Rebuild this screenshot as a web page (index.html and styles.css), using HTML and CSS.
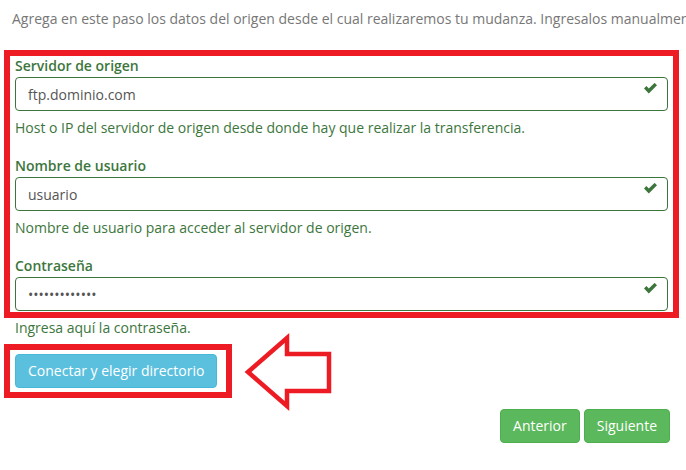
FILE: index.html
```html
<!DOCTYPE html>
<html lang="es">
<head>
  <meta charset="UTF-8">
  <meta name="viewport" content="width=device-width, initial-scale=1.0">
  <title>Mudanza - Datos del origen</title>
  <link rel="stylesheet" href="styles.css">
</head>
<body>

  <div class="page">
    <p class="intro">Agrega en este paso los datos del origen desde el cual realizaremos tu mudanza. Ingresalos manualmente o selecciona uno de tus servicios.</p>

    <div class="highlight highlight-form">
      <div class="form-group">
        <label for="host">Servidor de origen</label>
        <div class="input-wrap">
          <input id="host" type="text" value="ftp.dominio.com" readonly>
          <svg class="check" viewBox="0 0 13 11"><polygon points="0,5.4 2.4,3.1 4.8,5.6 10.6,-0.1 13,2.3 4.8,10.6"/></svg>
        </div>
        <p class="help">Host o IP del servidor de origen desde donde hay que realizar la transferencia.</p>
      </div>

      <div class="form-group">
        <label for="user">Nombre de usuario</label>
        <div class="input-wrap">
          <input id="user" type="text" value="usuario" readonly>
          <svg class="check" viewBox="0 0 13 11"><polygon points="0,5.4 2.4,3.1 4.8,5.6 10.6,-0.1 13,2.3 4.8,10.6"/></svg>
        </div>
        <p class="help">Nombre de usuario para acceder al servidor de origen.</p>
      </div>

      <div class="form-group last">
        <label for="pass">Contraseña</label>
        <div class="input-wrap">
          <input id="pass" type="password" value="1234567890123" readonly>
          <svg class="check" viewBox="0 0 13 11"><polygon points="0,5.4 2.4,3.1 4.8,5.6 10.6,-0.1 13,2.3 4.8,10.6"/></svg>
        </div>
      </div>
    </div>
    <p class="help help-outside">Ingresa aquí la contraseña.</p>

    <div class="connect-row">
      <div class="highlight highlight-btn">
        <button class="btn btn-info">Conectar y elegir directorio</button>
      </div>
      <svg class="arrow" viewBox="0 0 95 85" width="95" height="85">
        <polygon points="8,41 47,7 47,23 89,23 89,60 47,60 47,75" />
      </svg>
    </div>

    <div class="actions">
      <button class="btn btn-success">Anterior</button>
      <button class="btn btn-success">Siguiente</button>
    </div>
  </div>

</body>
</html>
```

FILE: styles.css
```css
* {
  margin: 0;
  padding: 0;
  box-sizing: border-box;
}

body {
  font-family: 'Open Sans', 'Liberation Sans', sans-serif;
  font-size: 14px;
  line-height: 20px;
  background: #fff;
  color: #333;
  width: 686px;
  overflow: hidden;
}

.page {
  width: 686px;
  overflow: hidden;
}

/* the sentence runs past the right edge in the original, so it is clipped */
.intro {
  color: #777;
  padding: 9px 0 0 12px;
  margin-bottom: 21px;
  white-space: nowrap;
}

.highlight {
  border: 6px solid #ed1c24;
  margin-left: 4px;
}

.highlight-form {
  width: 675px;
  padding: 0 5px 1px 5px;
}

.form-group label {
  display: block;
  color: #3c763d;
  font-weight: 600;
  margin-bottom: 1px;
}

.input-wrap {
  position: relative;
}

.input-wrap input {
  display: block;
  width: 100%;
  height: 34px;
  padding: 6px 12px;
  font-family: inherit;
  font-size: 14px;
  line-height: 20px;
  color: #555;
  background: #fff;
  border: 1px solid #3c763d;
  border-radius: 4px;
  outline: none;
}

.check {
  position: absolute;
  right: 11px;
  top: 6px;
  width: 13px;
  height: 11px;
  fill: #3c763d;
}

.help {
  color: #3c763d;
  margin: 7px 0 18px;
}

.help-outside {
  margin: 0 0 6px 15px;
}

.connect-row {
  display: flex;
  align-items: center;
}

.highlight-btn {
  padding: 4px 9px 4px 5px;
}

.arrow {
  margin: -14px 0 -18px 8px;
  fill: none;
  stroke: #ed1c24;
  stroke-width: 4.5;
  stroke-linejoin: miter;
}

.btn {
  display: inline-block;
  padding: 6px 12px;
  font-family: inherit;
  font-size: 14px;
  line-height: 20px;
  color: #fff;
  border: 1px solid transparent;
  border-radius: 4px;
  cursor: pointer;
  white-space: nowrap;
}

.btn-info {
  background: #5bc0de;
  border-color: #46b8da;
}

.btn-success {
  background: #5cb85c;
  border-color: #4cae4c;
}

.actions {
  display: flex;
  justify-content: flex-end;
  gap: 4px;
  margin-top: 11px;
  padding-right: 16px;
}
```
